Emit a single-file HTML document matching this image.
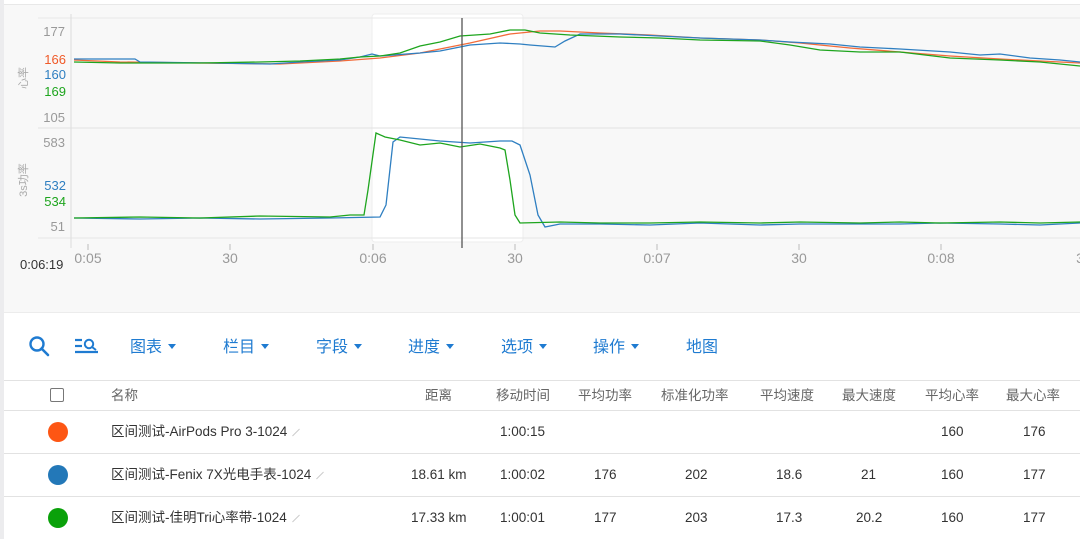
<!DOCTYPE html>
<html><head><meta charset="utf-8"><style>
*{margin:0;padding:0;box-sizing:border-box}
body{width:1080px;height:539px;overflow:hidden;background:#fff;font-family:"Liberation Sans","Noto Sans CJK SC",sans-serif;position:relative}
.lb{position:absolute;left:0;top:0;width:4px;height:539px;background:#ececee}
.chart{position:absolute;left:4px;top:4px;width:1076px;height:309px;background:#f8f8f8;border-top:1px solid #e8e8e8;border-bottom:1px solid #ececec}
.tb{position:absolute;top:337px;font-size:16px;line-height:22px;color:#1f7bd1}
.tb i{display:inline-block;width:0;height:0;border-left:4px solid transparent;border-right:4px solid transparent;border-top:5px solid #1f7bd1;vertical-align:middle;margin-left:6px;margin-top:-3px}
.row{position:absolute;left:4px;width:1076px;border-top:1px solid #e2e2e2}
.c{position:absolute;font-size:13.5px;line-height:16px;color:#333;white-space:nowrap}
.h{color:#666}
.dot{position:absolute;left:48px;width:20px;height:20px;border-radius:50%}
.p{display:inline-block;width:10px;height:1px;background:#ccc;transform:rotate(-45deg);vertical-align:middle;margin-left:4px}
</style></head><body>
<div class="lb"></div>
<div class="chart"></div>
<svg style="position:absolute;left:0;top:0" width="1080" height="313" font-family="Liberation Sans, Noto Sans CJK SC, sans-serif">
<rect x="372" y="14" width="151" height="228" rx="3" fill="#fff" stroke="#eee"/>
<line x1="38" y1="18" x2="1080" y2="18" stroke="#e8e8e8"/>
<line x1="38" y1="128" x2="1080" y2="128" stroke="#e2e2e2"/>
<line x1="38" y1="238" x2="1080" y2="238" stroke="#e6e6e6"/>
<line x1="71" y1="14" x2="71" y2="248" stroke="#ddd"/>
<g stroke="#bbb"><line x1="88" y1="244" x2="88" y2="250"/><line x1="230" y1="244" x2="230" y2="250"/><line x1="373" y1="244" x2="373" y2="250"/><line x1="515" y1="244" x2="515" y2="250"/><line x1="657" y1="244" x2="657" y2="250"/><line x1="799" y1="244" x2="799" y2="250"/><line x1="941" y1="244" x2="941" y2="250"/></g>
<g font-size="14" fill="#999" text-anchor="middle"><text x="88" y="263">0:05</text><text x="230" y="263">30</text><text x="373" y="263">0:06</text><text x="515" y="263">30</text><text x="657" y="263">0:07</text><text x="799" y="263">30</text><text x="941" y="263">0:08</text><text x="1080" y="263">3</text></g>
<text x="20" y="269" font-size="13" fill="#333">0:06:19</text>
<g font-size="13" text-anchor="end"><text x="65" y="36" fill="#999">177</text><text x="66" y="64" fill="#f05a28">166</text><text x="66" y="79" fill="#2f7fc1">160</text><text x="66" y="96" fill="#1ea51e">169</text><text x="65" y="122" fill="#999">105</text>
<text x="65" y="147" fill="#999">583</text><text x="66" y="190" fill="#2f7fc1">532</text><text x="66" y="206" fill="#1ea51e">534</text><text x="65" y="231" fill="#999">51</text></g>
<text transform="translate(27,78) rotate(-90)" font-size="11" fill="#aaa" text-anchor="middle">心率</text>
<text transform="translate(27,180) rotate(-90)" font-size="11" fill="#aaa" text-anchor="middle">3s功率</text>
<g fill="none" stroke-width="1.3">
<polyline stroke="#f26b3a" points="74,60 120,62 200,63 280,64 340,61 380,58 420,53 470,43 510,34 540,31 560,31 600,33 650,35 700,38 760,40 800,43 850,48 900,52 950,56 1000,59 1040,61 1080,63"/>
<polyline stroke="#2f7fc1" points="74,59 135,59 140,62 210,63 270,64 300,62 340,60 360,57 372,54 380,56 420,53 440,51 450,49 470,45 500,43 520,44 530,45 555,47 565,41 580,34 620,34 660,36 700,38 760,40 790,42 830,44 860,47 900,49 950,52 980,55 1000,54 1030,58 1060,60 1080,62"/>
<polyline stroke="#1ea51e" points="74,62 120,63 200,63 260,62 300,61 340,59 360,57 380,56 400,53 420,46 440,42 460,36 490,34 510,30 525,30 540,33 570,35 620,37 660,38 700,40 760,41 790,45 820,50 860,52 900,52 950,58 1000,60 1040,62 1080,66"/>
<polyline stroke="#2f7fc1" points="74,218 140,219 200,218 260,219 330,218 380,217 386,205 393,142 400,137 440,141 470,143 500,141 512,141 520,145 530,175 538,215 545,227 560,224 600,224 650,225 700,223 760,225 800,224 860,224 900,224 940,223 1000,224 1040,225 1080,223"/>
<polyline stroke="#1ea51e" points="74,218 140,217 200,218 260,216 330,217 350,215 364,215 368,190 376,133 385,137 400,140 420,145 440,143 460,147 480,144 500,148 505,150 510,180 515,215 520,223 560,222 600,223 650,223 700,222 760,223 800,222 860,223 900,222 940,223 1000,222 1040,223 1080,222"/>
</g>
<line x1="462" y1="18" x2="462" y2="248" stroke="#555" stroke-width="1.3"/>
</svg>
<svg style="position:absolute;left:28px;top:335px" width="24" height="24"><circle cx="9" cy="9" r="6.5" fill="none" stroke="#1f7bd1" stroke-width="2.4"/><line x1="13.5" y1="13.5" x2="20" y2="20" stroke="#1f7bd1" stroke-width="2.6" stroke-linecap="round"/></svg>
<svg style="position:absolute;left:74px;top:337px" width="26" height="18"><g stroke="#1f7bd1" stroke-width="2.2"><line x1="1" y1="3" x2="8" y2="3"/><line x1="1" y1="9" x2="8" y2="9"/><line x1="1" y1="15" x2="24" y2="15"/></g><circle cx="15" cy="7" r="4.2" fill="none" stroke="#1f7bd1" stroke-width="2"/><line x1="18" y1="10" x2="22" y2="13" stroke="#1f7bd1" stroke-width="2"/></svg>
<div class="tb" style="left:130px">图表<i></i></div>
<div class="tb" style="left:223px">栏目<i></i></div>
<div class="tb" style="left:316px">字段<i></i></div>
<div class="tb" style="left:408px">进度<i></i></div>
<div class="tb" style="left:501px">选项<i></i></div>
<div class="tb" style="left:593px">操作<i></i></div>
<div class="tb" style="left:686px">地图</div>
<div class="row" style="top:380px"></div>
<div style="position:absolute;left:50px;top:388px;width:14px;height:14px;border:1.5px solid #777;border-radius:2px"></div>
<div class="c h" style="left:111px;top:388px">名称</div>
<div class="c h" style="left:425px;top:388px">距离</div>
<div class="c h" style="left:496px;top:388px">移动时间</div>
<div class="c h" style="left:578px;top:388px">平均功率</div>
<div class="c h" style="left:661px;top:388px">标准化功率</div>
<div class="c h" style="left:760px;top:388px">平均速度</div>
<div class="c h" style="left:842px;top:388px">最大速度</div>
<div class="c h" style="left:925px;top:388px">平均心率</div>
<div class="c h" style="left:1006px;top:388px">最大心率</div>
<div class="row" style="top:410px"></div>
<div class="row" style="top:453px"></div>
<div class="row" style="top:496px"></div>
<div class="dot" style="top:422px;background:#fd5614"></div>
<div class="dot" style="top:465px;background:#2378b8"></div>
<div class="dot" style="top:508px;background:#0aa10a"></div>
<div class="c" style="left:111px;top:424px">区间测试-AirPods Pro 3-1024<span class="p"></span></div>
<div class="c" style="left:111px;top:467px">区间测试-Fenix 7X光电手表-1024<span class="p"></span></div>
<div class="c" style="left:111px;top:510px">区间测试-佳明Tri心率带-1024<span class="p"></span></div>
<div class="c" style="left:500px;top:424px">1:00:15</div>
<div class="c" style="left:941px;top:424px">160</div><div class="c" style="left:1023px;top:424px">176</div>
<div class="c" style="left:411px;top:467px">18.61 km</div><div class="c" style="left:500px;top:467px">1:00:02</div>
<div class="c" style="left:594px;top:467px">176</div><div class="c" style="left:685px;top:467px">202</div><div class="c" style="left:776px;top:467px">18.6</div><div class="c" style="left:861px;top:467px">21</div><div class="c" style="left:941px;top:467px">160</div><div class="c" style="left:1023px;top:467px">177</div>
<div class="c" style="left:411px;top:510px">17.33 km</div><div class="c" style="left:500px;top:510px">1:00:01</div>
<div class="c" style="left:594px;top:510px">177</div><div class="c" style="left:685px;top:510px">203</div><div class="c" style="left:776px;top:510px">17.3</div><div class="c" style="left:856px;top:510px">20.2</div><div class="c" style="left:941px;top:510px">160</div><div class="c" style="left:1023px;top:510px">177</div>
</body></html>
